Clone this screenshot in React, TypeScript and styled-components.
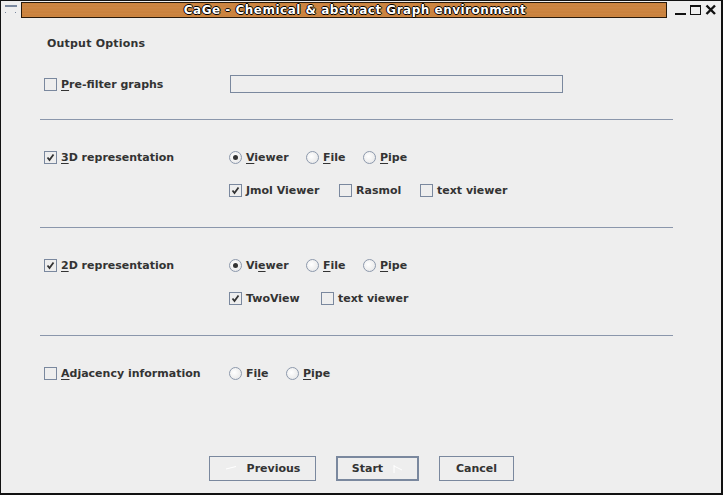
import React from "react";
import styled, { createGlobalStyle } from "styled-components";

const Global = createGlobalStyle`
  html, body { margin: 0; padding: 0; background: #eeeeee; }
  body { font-family: "DejaVu Sans", Verdana, sans-serif; }
`;

const Window = styled.div`
  width: 723px;
  height: 495px;
  box-sizing: border-box;
  background: #eeeeee;
  border-left: 1px solid #111;
  border-right: 2px solid #111;
  border-bottom: 2px solid #111;
  border-top: 1px solid #111;
  display: flex;
  flex-direction: column;
  overflow: hidden;
`;

const TitleBar = styled.div`
  height: 17px;
  display: flex;
  align-items: flex-start;
  padding-top: 1px;
`;

const MenuButton = styled.div`
  width: 20px;
  height: 16px;
  display: flex;
  align-items: flex-start;
  justify-content: center;
  padding-top: 3px;
  box-sizing: border-box;
`;

const TitleStrip = styled.div`
  flex: 1;
  height: 14px;
  margin-right: 8px;
  border: 1px solid #2a1a0a;
  background: repeating-linear-gradient(
    to bottom,
    #d08a44 0px,
    #c47a36 1px,
    #d59250 2px,
    #bf7431 3px
  );
  display: flex;
  align-items: center;
  justify-content: center;
  padding-left: 22px;
  font: bold 12px "DejaVu Sans", sans-serif;
  color: #ffffff;
  letter-spacing: 0.5px;
  text-shadow: 1px 0 0 #000, -1px 0 0 #000, 0 1px 0 #000, 0 -1px 0 #000;
  white-space: nowrap;
`;

const Controls = styled.div`
  display: flex;
  align-items: center;
  gap: 3px;
  padding-right: 4px;
  height: 16px;
`;

const Content = styled.div`
  flex: 1;
  display: flex;
  flex-direction: column;
`;

const Heading = styled.div`
  margin-top: 18px;
  margin-left: 46px;
  height: 18px;
  line-height: 18px;
  font: bold 11px "DejaVu Sans", sans-serif;
  letter-spacing: 0.2px;
  color: #333333;
`;

const Row = styled.div<{ $top: number }>`
  margin-top: ${(p) => p.$top}px;
  height: 20px;
  display: grid;
  grid-template-columns: 185px 1fr;
  align-items: center;
  padding-left: 43px;
`;

const Group = styled.div`
  display: flex;
  align-items: center;
`;

const Separator = styled.div<{ $top: number }>`
  margin-top: ${(p) => p.$top}px;
  margin-left: 39px;
  width: 633px;
  height: 1px;
  background: #8a96ab;
`;

const Option = styled.label<{ $width?: number }>`
  display: flex;
  align-items: center;
  gap: 4px;
  width: ${(p) => (p.$width ? `${p.$width}px` : "auto")};
  font: bold 11px "DejaVu Sans", sans-serif;
  color: #333333;
  white-space: nowrap;
`;

const Box = styled.span`
  width: 11px;
  height: 11px;
  border: 1px solid #7a889e;
  background: #eeeeee;
  display: inline-flex;
  align-items: center;
  justify-content: center;
  flex: none;
`;

const Circle = styled.span`
  width: 13px;
  height: 13px;
  box-sizing: border-box;
  border-radius: 50%;
  border: 1px solid #8d99ac;
  background: radial-gradient(circle at 40% 40%, #ffffff 0%, #eeeeee 60%, #dde2ea 100%);
  display: inline-flex;
  align-items: center;
  justify-content: center;
  flex: none;
`;

const Dot = styled.span`
  width: 5px;
  height: 5px;
  border-radius: 50%;
  background: #333333;
`;

const Mn = styled.span`
  text-decoration: underline;
  text-underline-offset: 2px;
  text-decoration-thickness: 1px;
`;

const TextField = styled.div`
  width: 331px;
  height: 16px;
  border: 1px solid #7a889e;
  background: #eeeeee;
  margin-left: 1px;
`;

const Spacer = styled.div`
  flex: 1;
`;

const ButtonBar = styled.div`
  display: flex;
  align-items: center;
  padding-left: 208px;
  gap: 20px;
  margin-bottom: 12px;
`;

const Button = styled.div<{ $w: number; $default?: boolean }>`
  width: ${(p) => p.$w}px;
  height: 25px;
  box-sizing: border-box;
  border: ${(p) => (p.$default ? "2px solid #7a889e" : "1px solid #7a889e")};
  background: #eeeeee;
  display: flex;
  align-items: center;
  justify-content: center;
  gap: 10px;
  font: bold 11px "DejaVu Sans", sans-serif;
  color: #333333;
`;

const Check = () => (
  <svg width="9" height="9" viewBox="0 0 9 9">
    <path d="M1.5 4.5 L3.5 7 L7.5 1.5" stroke="#333" strokeWidth="1.8" fill="none" />
  </svg>
);

const CheckBox = ({ checked, children, width }: { checked?: boolean; children: React.ReactNode; width?: number }) => (
  <Option $width={width}>
    <Box>{checked && <Check />}</Box>
    <span>{children}</span>
  </Option>
);

const Radio = ({ checked, children, width }: { checked?: boolean; children: React.ReactNode; width?: number }) => (
  <Option $width={width}>
    <Circle>{checked && <Dot />}</Circle>
    <span>{children}</span>
  </Option>
);

export default function App() {
  return (
    <>
      <Global />
      <Window>
        <TitleBar>
          <MenuButton>
            <svg width="12" height="10" viewBox="0 0 12 10">
              <rect x="0" y="0" width="12" height="2" fill="#7a889e" />
              <rect x="0" y="7" width="1" height="1" fill="#7a889e" />
              <rect x="10" y="7" width="1" height="1" fill="#7a889e" />
            </svg>
          </MenuButton>
          <TitleStrip>CaGe - Chemical &amp; abstract Graph environment</TitleStrip>
          <Controls>
            <svg width="12" height="12" viewBox="0 0 12 12">
              <rect x="0" y="9" width="11" height="2" fill="#111" />
            </svg>
            <svg width="12" height="12" viewBox="0 0 12 12">
              <rect x="0.5" y="1.5" width="10" height="9" fill="none" stroke="#111" strokeWidth="1" />
              <rect x="0" y="1" width="11" height="2" fill="#111" />
            </svg>
            <svg width="12" height="12" viewBox="0 0 12 12">
              <path d="M1.5 1.5 L10 10 M10 1.5 L1.5 10" stroke="#111" strokeWidth="2.4" />
            </svg>
          </Controls>
        </TitleBar>
        <Content>
          <Heading>Output Options</Heading>
          <Row $top={19}>
            <CheckBox><Mn>P</Mn>re-filter graphs</CheckBox>
            <TextField />
          </Row>
          <Separator $top={25} />
          <Row $top={27}>
            <CheckBox checked><Mn>3</Mn>D representation</CheckBox>
            <Group>
              <Radio checked width={77}><Mn>V</Mn>iewer</Radio>
              <Radio width={57}><Mn>F</Mn>ile</Radio>
              <Radio><Mn>P</Mn>ipe</Radio>
            </Group>
          </Row>
          <Row $top={13}>
            <span />
            <Group>
              <CheckBox checked width={110}>Jmol Viewer</CheckBox>
              <CheckBox width={81}>Rasmol</CheckBox>
              <CheckBox>text viewer</CheckBox>
            </Group>
          </Row>
          <Separator $top={27} />
          <Row $top={27}>
            <CheckBox checked><Mn>2</Mn>D representation</CheckBox>
            <Group>
              <Radio checked width={77}>Vi<Mn>e</Mn>wer</Radio>
              <Radio width={57}><Mn>F</Mn>ile</Radio>
              <Radio><Mn>P</Mn>ipe</Radio>
            </Group>
          </Row>
          <Row $top={13}>
            <span />
            <Group>
              <CheckBox checked width={92}>TwoView</CheckBox>
              <CheckBox>text viewer</CheckBox>
            </Group>
          </Row>
          <Separator $top={27} />
          <Row $top={27}>
            <CheckBox><Mn>A</Mn>djacency information</CheckBox>
            <Group>
              <Radio width={57}>Fi<Mn>l</Mn>e</Radio>
              <Radio><Mn>P</Mn>ipe</Radio>
            </Group>
          </Row>
          <Spacer />
          <ButtonBar>
            <Button $w={107}>
              <svg width="12" height="6" viewBox="0 0 12 6">
                <path d="M11 0.5 L1 3" stroke="#ffffff" strokeWidth="1" />
              </svg>
              Previous
            </Button>
            <Button $w={83} $default>
              Start
              <svg width="10" height="8" viewBox="0 0 10 8">
                <path d="M1 0 L1 8 M1 1 L9 5" stroke="#ffffff" strokeWidth="1" fill="none" />
              </svg>
            </Button>
            <Button $w={75}>Cancel</Button>
          </ButtonBar>
        </Content>
      </Window>
    </>
  );
}
